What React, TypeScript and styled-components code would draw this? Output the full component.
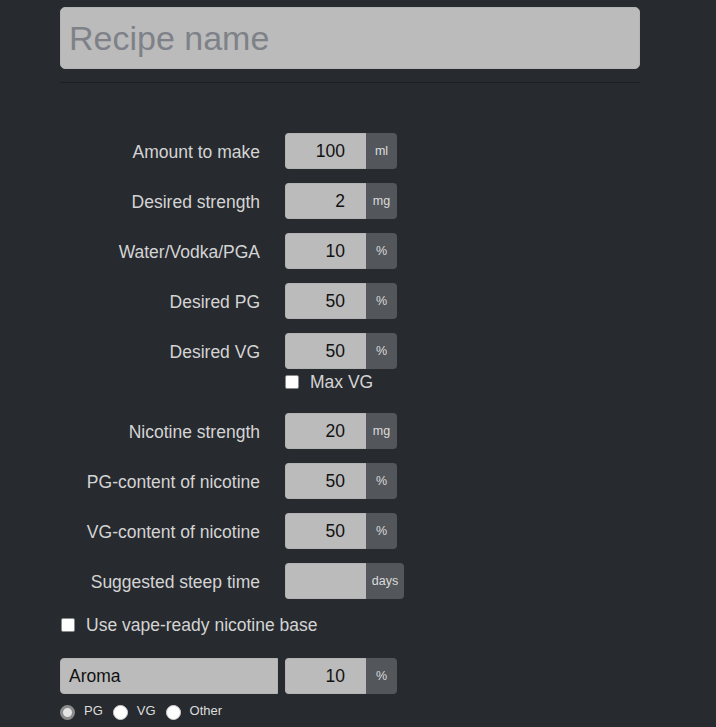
import * as React from 'react';
import styled, { createGlobalStyle } from 'styled-components';

const GlobalStyle = createGlobalStyle`
  body {
    margin: 0;
    background: #272a2f;
    font-family: "Liberation Sans", Arial, sans-serif;
  }
`;

const Page = styled.div`
  width: 580px;
  padding: 7px 0 0 60px;
  min-height: 720px;
`;

const NameInput = styled.input`
  display: block;
  box-sizing: border-box;
  width: 100%;
  height: 62px;
  padding: 0 8px;
  background: #bbbbbb;
  border: 1px solid #b3b3b3;
  border-radius: 5px;
  font-family: inherit;
  font-size: 34px;
  color: #222;
  outline: none;
  &::placeholder {
    color: #7e8288;
  }
`;

const Divider = styled.hr`
  margin: 13px 0 50px;
  border: 0;
  border-top: 1px solid #1c1e21;
`;

const Row = styled.div`
  display: grid;
  grid-template-columns: 200px auto;
  column-gap: 25px;
  align-items: start;
  margin-bottom: 14px;
`;

const Label = styled.label`
  text-align: right;
  line-height: 36px;
  height: 36px;
  padding-top: 1px;
  box-sizing: border-box;
  font-size: 17.5px;
  color: #d4d4d4;
`;

const Field = styled.div`
  display: flex;
  flex-direction: column;
`;

const Group = styled.div`
  display: flex;
  height: 36px;
`;

const NumInput = styled.input`
  box-sizing: border-box;
  width: 81px;
  height: 100%;
  padding: 0 21px 0 8px;
  border: 1px solid #b3b3b3;
  border-right: 0;
  border-radius: 4px 0 0 4px;
  background: #bbbbbb;
  font-family: inherit;
  font-size: 17.5px;
  color: #111;
  text-align: right;
  outline: none;
`;

const Addon = styled.span<{ $wide?: boolean }>`
  display: flex;
  align-items: center;
  justify-content: center;
  width: ${(p) => (p.$wide ? 38 : 31)}px;
  background: #53575b;
  border-radius: 0 4px 4px 0;
  font-size: 12.5px;
  color: #dcdcdc;
`;

const CheckLine = styled.label<{ $indent?: number }>`
  display: flex;
  align-items: center;
  gap: 11px;
  height: 24px;
  padding-left: ${(p) => p.$indent ?? 0}px;
  font-size: 17.5px;
  color: #d4d4d4;
`;

const SubCheck = styled(CheckLine)`
  margin: 1px 0 5px;
`;

const Box = styled.input`
  appearance: none;
  box-sizing: border-box;
  width: 14px;
  height: 14px;
  margin: 0;
  background: #fff;
  border: 1px solid #8a8a8a;
  border-radius: 2px;
`;

const AromaRow = styled.div`
  display: grid;
  grid-template-columns: 218px auto;
  column-gap: 7px;
  margin-top: 21px;
`;

const TextInput = styled.input`
  box-sizing: border-box;
  width: 100%;
  height: 36px;
  padding: 0 8px;
  border: 1px solid #b3b3b3;
  border-radius: 4px 0 0 4px;
  background: #bbbbbb;
  font-family: inherit;
  font-size: 17.5px;
  color: #111;
  outline: none;
`;

const Radios = styled.div`
  display: flex;
  align-items: center;
  height: 22px;
  margin-top: 7px;
  gap: 10px;
`;

const RadioItem = styled.label`
  display: flex;
  align-items: center;
  gap: 9px;
  font-size: 13px;
  color: #dcdcdc;
  line-height: 1;
  padding-bottom: 3px;
`;

const Radio = styled.input`
  appearance: none;
  box-sizing: border-box;
  width: 15px;
  height: 15px;
  margin: 3px 0 0;
  border-radius: 50%;
  background: #fff;
  border: 1px solid #d0d0d0;
  &:checked {
    background: #e4e4e4;
    border: 3px solid #8c8c8c;
  }
`;

type NumRow = { label: string; value: string; unit: string };

const rows1: NumRow[] = [
  { label: 'Amount to make', value: '100', unit: 'ml' },
  { label: 'Desired strength', value: '2', unit: 'mg' },
  { label: 'Water/Vodka/PGA', value: '10', unit: '%' },
  { label: 'Desired PG', value: '50', unit: '%' },
];

const rows2: NumRow[] = [
  { label: 'Nicotine strength', value: '20', unit: 'mg' },
  { label: 'PG-content of nicotine', value: '50', unit: '%' },
  { label: 'VG-content of nicotine', value: '50', unit: '%' },
  { label: 'Suggested steep time', value: '', unit: 'days' },
];

function NumberGroup({ value, unit }: { value: string; unit: string }) {
  return (
    <Group>
      <NumInput defaultValue={value} />
      <Addon $wide={unit === 'days'}>{unit}</Addon>
    </Group>
  );
}

export default function App() {
  return (
    <Page>
      <GlobalStyle />
      <NameInput placeholder="Recipe name" />
      <Divider />
      {rows1.map((r) => (
        <Row key={r.label}>
          <Label>{r.label}</Label>
          <NumberGroup value={r.value} unit={r.unit} />
        </Row>
      ))}
      <Row>
        <Label>Desired VG</Label>
        <Field>
          <NumberGroup value="50" unit="%" />
          <SubCheck>
            <Box type="checkbox" />
            Max VG
          </SubCheck>
        </Field>
      </Row>
      {rows2.map((r) => (
        <Row key={r.label}>
          <Label>{r.label}</Label>
          <NumberGroup value={r.value} unit={r.unit} />
        </Row>
      ))}
      <CheckLine $indent={1}>
        <Box type="checkbox" />
        Use vape-ready nicotine base
      </CheckLine>
      <AromaRow>
        <TextInput defaultValue="Aroma" />
        <NumberGroup value="10" unit="%" />
      </AromaRow>
      <Radios>
        <RadioItem>
          <Radio type="radio" name="base" defaultChecked />
          PG
        </RadioItem>
        <RadioItem>
          <Radio type="radio" name="base" />
          VG
        </RadioItem>
        <RadioItem>
          <Radio type="radio" name="base" />
          Other
        </RadioItem>
      </Radios>
    </Page>
  );
}
